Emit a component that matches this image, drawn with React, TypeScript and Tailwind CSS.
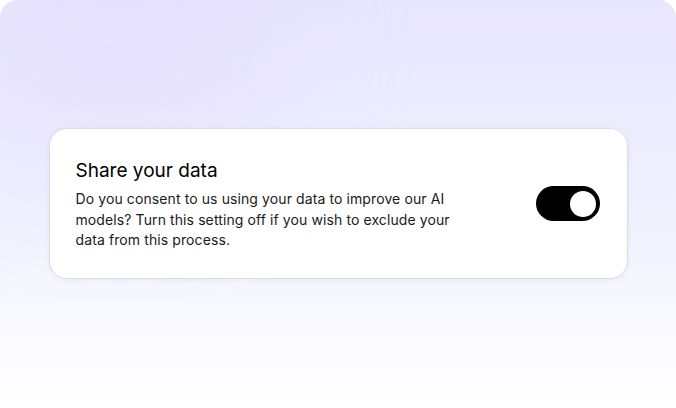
export default function App() {
  return (
    <div className="w-[676px] h-[408px] bg-white" style={{ fontFamily: "Inter, 'Noto Sans', sans-serif" }}>
      <div className="relative w-full h-full rounded-t-[18px] overflow-hidden bg-gradient-to-b from-[#e8e5fe] via-[#f0f0fe] to-white flex items-center justify-center pb-[1px]">
        <div className="absolute -left-10 -top-10 w-[320px] h-[200px] rounded-full bg-[#e4defe] opacity-60 blur-3xl" />
        <div className="relative w-[579px] h-[151px] rounded-[18px] bg-white border border-[#dedbe8] shadow-[0_1px_4px_rgba(90,80,140,0.08)] flex items-center justify-between pl-[26px] pr-7">
          <div className="w-[400px] flex flex-col pt-[3px]">
            <h2 className="text-[19px] leading-[24px] text-black font-normal">Share your data</h2>
            <p className="mt-[6px] text-[14px] leading-[20.5px] tracking-[0.1px] text-[#1a1a1a]">
              Do you consent to us using your data to improve our AI models? Turn this setting off if you wish to exclude your data from this process.
            </p>
          </div>
          <button
            type="button"
            aria-label="Share your data"
            className="w-[64px] h-[35px] rounded-full bg-black flex items-center justify-end pr-[4px] mr-[-1px]"
          >
            <span className="w-[26px] h-[26px] rounded-full bg-white" />
          </button>
        </div>
      </div>
    </div>
  );
}
